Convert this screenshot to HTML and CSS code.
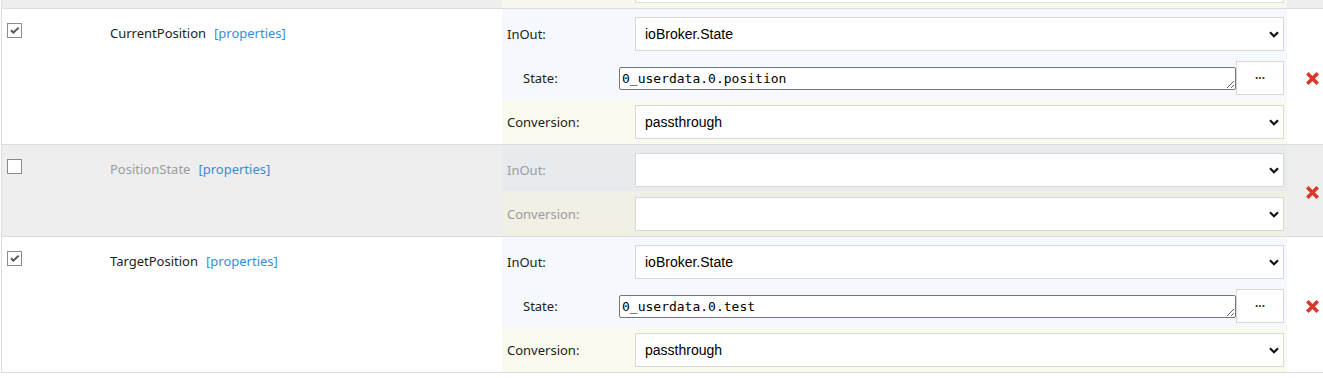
FILE: index.html
```html
<!DOCTYPE html>
<html lang="en"><head>
    <meta charset="UTF-8">
    <meta name="viewport" content="width=device-width, initial-scale=1.0">
    <title>States</title>
    <link rel="stylesheet" href="styles.css">
</head>

<body>

    <div class="mappings">

        <!-- end of the previous row, scrolled away -->
        <div class="row disabled stub">
            <div class="cell-check"></div>
            <div class="cell-name"></div>
            <div class="cell-config">
                <div class="stub-band"><div class="stub-select"></div></div>
            </div>
            <div class="cell-del"></div>
        </div>

        <div class="row">
            <div class="cell-check">
                <span class="check"><svg width="13" height="13" viewBox="0 0 13 13"><path d="M3 6.2 L5.4 8.6 L10.6 3.6" fill="none" stroke="#555" stroke-width="2"/></svg></span>
            </div>
            <div class="cell-name">
                <span class="name">CurrentPosition</span><a class="props" href="#">[properties]</a>
            </div>
            <div class="cell-config">
                <div class="sub inout">
                    <label>InOut:</label>
                    <div class="select-wrap">
                        <select><option>ioBroker.State</option></select>
                        <svg class="chev" width="10" height="7" viewBox="0 0 10 7"><path d="M1 1.2 L5 5.2 L9 1.2" fill="none" stroke="#111" stroke-width="2.2"/></svg>
                    </div>
                </div>
                <div class="sub state">
                    <label>State:</label>
                    <textarea rows="1" spellcheck="false">0_userdata.0.position</textarea>
                    <button class="pick" type="button">...</button>
                </div>
                <div class="sub conv">
                    <label>Conversion:</label>
                    <div class="select-wrap">
                        <select><option>passthrough</option></select>
                        <svg class="chev" width="10" height="7" viewBox="0 0 10 7"><path d="M1 1.2 L5 5.2 L9 1.2" fill="none" stroke="#111" stroke-width="2.2"/></svg>
                    </div>
                </div>
            </div>
            <div class="cell-del">
                <svg class="del" width="15" height="15" viewBox="0 0 15 15"><path d="M2.3 2.3 L12.7 12.7 M12.7 2.3 L2.3 12.7" stroke="#d8392b" stroke-width="3.6"/></svg>
            </div>
        </div>

        <div class="row disabled">
            <div class="cell-check">
                <span class="check"></span>
            </div>
            <div class="cell-name">
                <span class="name">PositionState</span><a class="props" href="#">[properties]</a>
            </div>
            <div class="cell-config">
                <div class="sub inout">
                    <label>InOut:</label>
                    <div class="select-wrap">
                        <select><option></option></select>
                        <svg class="chev" width="10" height="7" viewBox="0 0 10 7"><path d="M1 1.2 L5 5.2 L9 1.2" fill="none" stroke="#111" stroke-width="2.2"/></svg>
                    </div>
                </div>
                <div class="sub conv">
                    <label>Conversion:</label>
                    <div class="select-wrap">
                        <select><option></option></select>
                        <svg class="chev" width="10" height="7" viewBox="0 0 10 7"><path d="M1 1.2 L5 5.2 L9 1.2" fill="none" stroke="#111" stroke-width="2.2"/></svg>
                    </div>
                </div>
            </div>
            <div class="cell-del">
                <svg class="del" width="15" height="15" viewBox="0 0 15 15"><path d="M2.3 2.3 L12.7 12.7 M12.7 2.3 L2.3 12.7" stroke="#d8392b" stroke-width="3.6"/></svg>
            </div>
        </div>

        <div class="row">
            <div class="cell-check">
                <span class="check"><svg width="13" height="13" viewBox="0 0 13 13"><path d="M3 6.2 L5.4 8.6 L10.6 3.6" fill="none" stroke="#555" stroke-width="2"/></svg></span>
            </div>
            <div class="cell-name">
                <span class="name">TargetPosition</span><a class="props" href="#">[properties]</a>
            </div>
            <div class="cell-config">
                <div class="sub inout">
                    <label>InOut:</label>
                    <div class="select-wrap">
                        <select><option>ioBroker.State</option></select>
                        <svg class="chev" width="10" height="7" viewBox="0 0 10 7"><path d="M1 1.2 L5 5.2 L9 1.2" fill="none" stroke="#111" stroke-width="2.2"/></svg>
                    </div>
                </div>
                <div class="sub state">
                    <label>State:</label>
                    <textarea rows="1" spellcheck="false">0_userdata.0.test</textarea>
                    <button class="pick" type="button">...</button>
                </div>
                <div class="sub conv">
                    <label>Conversion:</label>
                    <div class="select-wrap">
                        <select><option>passthrough</option></select>
                        <svg class="chev" width="10" height="7" viewBox="0 0 10 7"><path d="M1 1.2 L5 5.2 L9 1.2" fill="none" stroke="#111" stroke-width="2.2"/></svg>
                    </div>
                </div>
            </div>
            <div class="cell-del">
                <svg class="del" width="15" height="15" viewBox="0 0 15 15"><path d="M2.3 2.3 L12.7 12.7 M12.7 2.3 L2.3 12.7" stroke="#d8392b" stroke-width="3.6"/></svg>
            </div>
        </div>

    </div>

</body></html>
```

FILE: styles.css
```css
body {
    font-family: 'Noto Sans', 'Open Sans', sans-serif;
    font-size: 13px;
    color: #222;
    margin: 0;
    padding: 0;
    background-color: #fff;
}

.mappings {
    margin-left: 1px;
    border-left: 1px solid #ddd;
}

.row {
    display: grid;
    grid-template-columns: 108px 392px 785px 1fr;
    border-bottom: 1px solid #ddd;
    background-color: #fff;
}

.row.disabled {
    background-color: #eee;
}

.row.stub {
    height: 8px;
    overflow: hidden;
}

.cell-check {
    padding: 14px 0 0 5px;
}

.check {
    display: flex;
    align-items: center;
    justify-content: center;
    width: 15px;
    height: 15px;
    box-sizing: border-box;
    border: 1px solid #8a8a8a;
    background-color: #fff;
}

.cell-name {
    padding-top: 16px;
    line-height: 17px;
}

.name {
    color: #1e1e1e;
}

.disabled .name {
    color: #9c9c9c;
}

.props {
    margin-left: 8px;
    color: #3a8dd0;
    text-decoration: none;
}

.cell-config {
    display: flex;
    flex-direction: column;
}

.sub {
    display: flex;
    align-items: center;
    padding-right: 3px;
    background-color: #f5f9fd;
}

.sub label {
    width: 133px;
    flex-shrink: 0;
    box-sizing: border-box;
    padding-left: 5px;
    color: #222;
}

.disabled .sub label {
    color: #9c9c9c;
}

.sub.inout {
    padding-top: 8px;
    padding-bottom: 4px;
}

.sub.state {
    padding-top: 6px;
    padding-bottom: 5px;
}

.sub.state label {
    width: 117px;
    padding-left: 21px;
}

.sub.conv {
    padding-top: 5px;
    padding-bottom: 5px;
    background-color: #fafaee;
}

.disabled .sub.inout {
    background-color: #e8ebee;
}

.disabled .sub.conv {
    padding-top: 6px;
    background-color: #f0f0e5;
}

.stub-band {
    height: 8px;
    background-color: #f8f8ec;
    padding-right: 3px;
}

.stub-select {
    margin-left: 133px;
    height: 2px;
    border: 1px solid #ddd;
    border-top: none;
    background-color: #fff;
}

.select-wrap {
    flex: 1;
    position: relative;
}

.select-wrap select {
    display: block;
    width: 100%;
    height: 34px;
    box-sizing: border-box;
    border: 1px solid #d8d8d8;
    border-radius: 0;
    background-color: #fff;
    -webkit-appearance: none;
    appearance: none;
    padding: 0 9px;
    font-family: 'Liberation Sans', Arial, sans-serif;
    font-size: 14px;
    color: #000;
}

/* pfeil liegt über dem select */
.chev {
    position: absolute;
    right: 5px;
    top: 14px;
    pointer-events: none;
}

.sub textarea {
    width: 617px;
    height: 23px;
    box-sizing: border-box;
    border: 1px solid #767676;
    border-radius: 2px;
    padding: 2px 2px 0;
    margin: 0;
    font-family: 'DejaVu Sans Mono', 'Liberation Mono', monospace;
    font-size: 13px;
    line-height: 17px;
    color: #000;
    overflow: hidden;
    background-color: #fff;
}

.pick {
    width: 48px;
    height: 34px;
    box-sizing: border-box;
    border: 1px solid #d8d8d8;
    border-radius: 0;
    background-color: #fff;
    padding: 0 0 6px;
    font-family: 'Liberation Sans', Arial, sans-serif;
    font-size: 12px;
    font-weight: bold;
    color: #333;
    cursor: pointer;
}

.cell-del {
    display: flex;
    align-items: center;
    padding: 4px 0 0 18px;
}
```
